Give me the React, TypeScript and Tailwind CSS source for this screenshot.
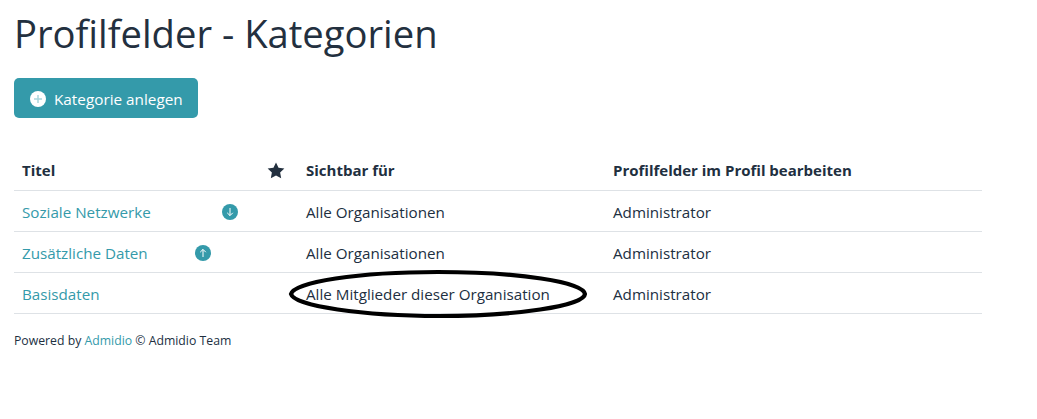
import React from "react";

function Arrow({ up }: { up?: boolean }) {
  return (
    <svg width="16" height="16" viewBox="0 0 16 16" className="block">
      <circle cx="8" cy="8" r="8" fill="#349aaa" />
      {up ? (
        <path d="M8 12V4.5M5.2 7.2 8 4.4l2.8 2.8" stroke="#fff" strokeWidth="1" fill="none" />
      ) : (
        <path d="M8 4v7.5M5.2 8.8 8 11.6l2.8-2.8" stroke="#fff" strokeWidth="1" fill="none" />
      )}
    </svg>
  );
}

const rows = [
  { t: "Soziale Netzwerke", v: "Alle Organisationen", icon: "down" },
  { t: "Zusätzliche Daten", v: "Alle Organisationen", icon: "up" },
  { t: "Basisdaten", v: "Alle Mitglieder dieser Organisation", icon: "" },
];

export default function App() {
  return (
    <div className="relative h-[419px] w-[1037px] overflow-hidden bg-white pl-[14px] font-['Open_Sans',sans-serif] text-[#212f3f]">
      <h1 className="pt-[9px] text-[38.2px] font-normal leading-[48px] text-[#23303f]">Profilfelder - Kategorien</h1>
      <button className="mt-[21px] flex h-[40px] w-[184px] items-center rounded-[5px] bg-[#349aaa] pl-[16px] text-[15.3px] text-white">
        <svg width="16" height="16" viewBox="0 0 16 16" className="mr-[8px] mt-[2px]">
          <circle cx="8" cy="8" r="8" fill="#fff" />
          <path d="M8 4v8M4 8h8" stroke="#a9d6dd" strokeWidth="1.5" />
        </svg>
        <span className="pt-[2px]">Kategorie anlegen</span>
      </button>
      <div className="mt-[33px] w-[968px] text-[15.2px]">
        <div className="flex h-[40px] items-center border-b border-[#dee2e6] text-[15px] font-bold">
          <div className="flex w-[292px] items-center justify-between pl-[8px] pr-[21px]">
            <span>Titel</span>
            <svg width="18" height="17" viewBox="0 0 17 16"><path d="M8.5.4l2.4 5 5.5.7-4 3.8 1 5.4-4.9-2.6-4.9 2.6 1-5.4-4-3.8 5.5-.7z" fill="#23303f" /></svg>
          </div>
          <div className="w-[307px]">Sichtbar für</div>
          <div>Profilfelder im Profil bearbeiten</div>
        </div>
        {rows.map((r) => (
          <div key={r.t} className="flex h-[41px] items-center border-b border-[#dee2e6] pt-[2px]">
            <div className="flex w-[292px] items-center pl-[8px]">
              <span className="text-[#349aaa]">{r.t}</span>
              {r.icon === "down" && <span className="ml-[71px]"><Arrow /></span>}
              {r.icon === "up" && <span className="ml-[47px]"><Arrow up /></span>}
            </div>
            <div className="w-[307px]">{r.v}</div>
            <div>Administrator</div>
          </div>
        ))}
      </div>
      <div className="mt-[18px] text-[12.25px] leading-[18px]">
        Powered by <span className="text-[#349aaa]">Admidio</span> © Admidio Team
      </div>
      <svg className="absolute left-[288px] top-[268px]" width="300" height="52" viewBox="0 0 300 52">
        <path d="M3 26C6 14 70 4 150 4c80 0 146 10 147 22-1 12-70 22-146 22C75 48 6 38 3 26z" fill="none" stroke="#000" strokeWidth="4.2" />
      </svg>
    </div>
  );
}
